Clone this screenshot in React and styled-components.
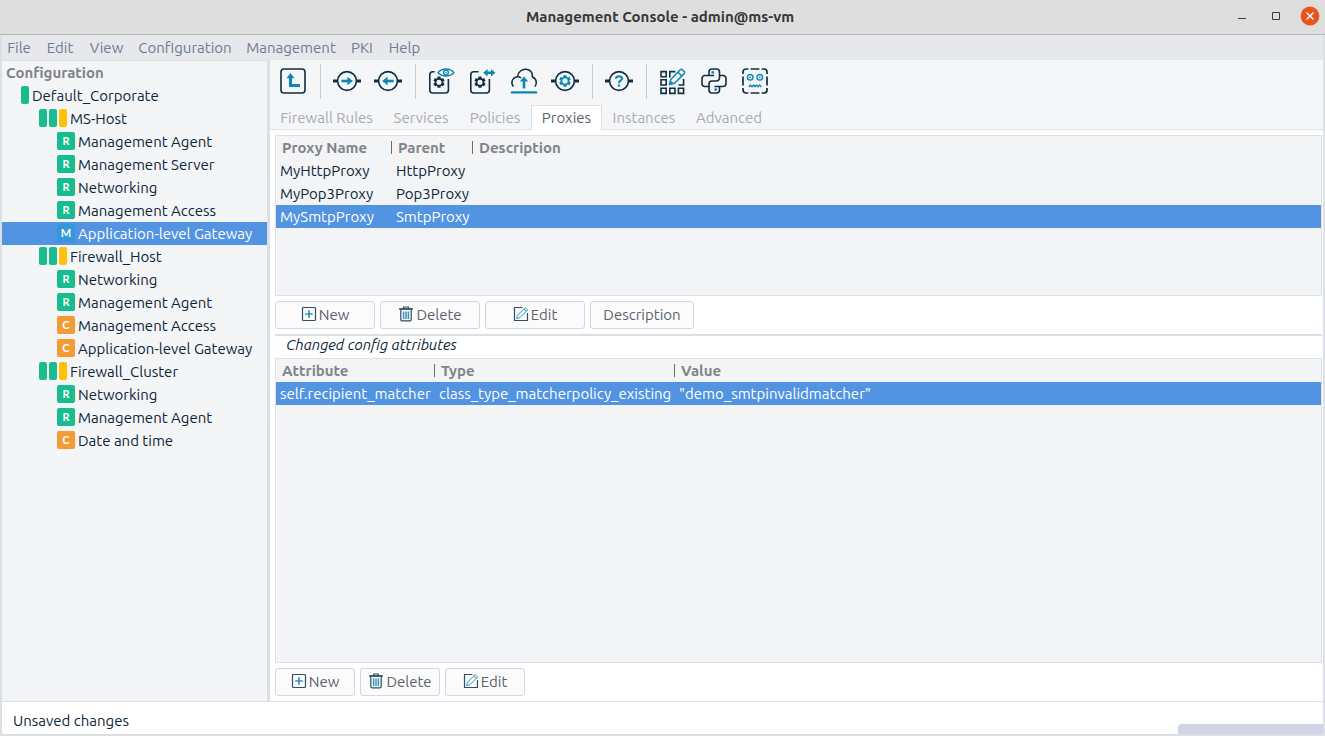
import React from 'react';
import styled, { createGlobalStyle } from 'styled-components';

const ink = '#0f2f44';
const text = '#0d2638';
const accent = '#0e86b4';
const selected = '#5294e2';
const line = '#dcdfe3';
const surface = '#f3f5f7';

const GlobalStyle = createGlobalStyle`
  *, *::before, *::after { box-sizing: border-box; }
  body {
    margin: 0;
    background: #fff;
    color: ${text};
    font: 15px/23px Ubuntu, "Open Sans", "Noto Sans", sans-serif;
  }
  button { font: inherit; color: inherit; margin: 0; padding: 0; border: 0; background: none; }
  svg { display: block; flex: none; }
`;

const Window = styled.div`
  display: flex;
  flex-direction: column;
  min-height: 100vh;
`;

const TitleBar = styled.header`
  display: grid;
  grid-template-columns: 1fr auto 1fr;
  align-items: center;
  height: 35px;
  padding: 0 5px 2px 0;
  background: #dedede;
  border-bottom: 1px solid #b6b6b3;
`;

const Title = styled.h1`
  grid-column: 2;
  margin: 0;
  padding-top: 2px;
  font-size: 15px;
  line-height: 20px;
  font-weight: 700;
  color: #363636;
`;

const WindowControls = styled.div`
  display: flex;
  justify-content: flex-end;
  align-items: center;
  gap: 14px;
`;

const WindowButton = styled.button`
  display: grid;
  place-items: center;
  width: 20px;
  height: 20px;
`;

const Body = styled.div`
  flex: 1;
  display: flex;
  flex-direction: column;
  border: solid ${line};
  border-width: 0 2px 2px;
`;

const MenuBar = styled.nav`
  display: flex;
  height: 25px;
  background: #e7e8eb;
  color: #707a90;
`;

const MenuItem = styled.button`
  width: ${(p) => p.$width}px;
  white-space: nowrap;
`;

const Workspace = styled.div`
  flex: 1;
  display: flex;
`;

const Sidebar = styled.aside`
  flex: none;
  width: 268px;
  border-right: 3px solid ${line};
  border-top: 1px solid ${line};
  background: ${surface};
`;

const SidebarTitle = styled.h2`
  margin: 0;
  padding-left: 4px;
  font-size: 15px;
  line-height: 23px;
  font-weight: 700;
  color: #808388;
`;

const Tree = styled.ul`
  margin: 0;
  padding: 0;
  list-style: none;
`;

const TreeRow = styled.li`
  display: flex;
  align-items: flex-start;
  gap: 3px;
  height: 23px;
  padding-left: ${(p) => 19 + p.$depth * 18}px;
  white-space: nowrap;
  background: ${(p) => (p.$active ? selected : 'transparent')};
  color: ${(p) => (p.$active ? '#fff' : text)};
`;

const Bars = styled.span`
  display: flex;
  gap: 2px;
  margin-top: 2px;
`;

const Bar = styled.span`
  width: 8px;
  height: 18px;
  border-radius: 2px;
  background: ${(p) => (p.$warn ? '#ffc107' : '#18bc8e')};
`;

const badgeColors = { R: '#18bc8e', M: '#3498db', C: '#f39c35' };

const Badge = styled.span`
  width: 18px;
  height: 18px;
  margin-top: 2px;
  border-radius: 2px;
  background: ${(p) => badgeColors[p.$kind]};
  color: #fff;
  font: 700 11px/18px Lato, sans-serif;
  text-align: center;
`;

const Main = styled.main`
  flex: 1;
  min-width: 0;
  display: flex;
  flex-direction: column;
`;

const Toolbar = styled.div`
  display: flex;
  align-items: center;
  height: 45px;
  padding: 0 3px 3px;
  background: #f5f6f7;
`;

const ToolButton = styled.button`
  display: flex;
  align-items: center;
  width: 41px;
  height: 38px;
  padding-left: 6px;
`;

const ToolDivider = styled.span`
  width: 1px;
  height: 35px;
  margin: 0 6px;
  background: #c9cccf;
`;

const Tabs = styled.div`
  display: flex;
  height: 25px;
  background: #f5f6f7;
  box-shadow: inset 0 -1px ${line};
`;

const Tab = styled.button`
  width: ${(p) => p.$width}px;
  padding-bottom: 2px;
  white-space: nowrap;
  border: 1px solid ${(p) => (p.$active ? line : 'transparent')};
  border-bottom: 0;
  background: ${(p) => (p.$active ? '#fff' : 'transparent')};
  color: ${(p) => (p.$active ? '#5c616c' : '#a7abb2')};
`;

const Panel = styled.section`
  flex: 1;
  display: flex;
  flex-direction: column;
  padding: 5px 1px 5px 5px;
`;

const GridBox = styled.div`
  ${(p) => (p.$fill ? 'flex: 1;' : 'height: 161px;')}
  border: 1px solid ${line};
  background: #f3f4f6;
`;

const Table = styled.table`
  width: 100%;
  table-layout: fixed;
  border-collapse: collapse;
  white-space: nowrap;
`;

const HeadCell = styled.th`
  height: 23px;
  padding: 0;
  width: ${(p) => (p.$width ? `${p.$width}px` : 'auto')};
  text-align: left;
  color: #808388;
`;

const HeadLabel = styled.span`
  display: block;
  padding-left: 6px;
  line-height: 13px;
  border-right: ${(p) => (p.$last ? 0 : '1px solid #6a6e75')};
`;

const Row = styled.tr`
  background: ${(p) => (p.$active ? selected : 'transparent')};
  color: ${(p) => (p.$active ? '#fff' : text)};
`;

const Cell = styled.td`
  height: 23px;
  padding: 0 0 0 4px;
`;

const Actions = styled.div`
  display: flex;
  gap: 5px;
  padding-top: 5px;
`;

const ActionButton = styled.button`
  display: flex;
  justify-content: center;
  align-items: center;
  gap: 2px;
  width: ${(p) => p.$width}px;
  height: 28px;
  padding-bottom: 2px;
  border: 1px solid #cfd6e6;
  border-radius: 3px;
  background: #fbfbfc;
  color: #5c616c;
`;

const Splitter = styled.hr`
  width: 100%;
  height: 2px;
  margin: 5px 0 0;
  border: 0;
  background: ${line};
`;

const Caption = styled.h3`
  margin: 0;
  padding-left: 11px;
  font-size: 15px;
  line-height: 18px;
  height: 22px;
  font-weight: 400;
  font-style: italic;
`;

const StatusBar = styled.footer`
  display: flex;
  justify-content: space-between;
  height: 33px;
  border-top: 1px solid ${line};
  padding-left: 11px;
  line-height: 38px;
`;

const Progress = styled.div`
  align-self: flex-end;
  width: 145px;
  height: 10px;
  border-radius: 4px 0 0 0;
  background: #cfd5e6;
`;

const Svg = ({ size = 28, children }) => (
  <svg width={size} height={size} viewBox={`0 0 ${size} ${size}`} fill="none" stroke={ink}
    strokeWidth={size === 28 ? 1.8 : 1.2} strokeLinecap="butt" strokeLinejoin="round"
    opacity={size === 28 ? 1 : 0.85} aria-hidden="true">
    {children}
  </svg>
);

const gearPath = (cx, cy, r) => {
  const points = [];
  for (let i = 0; i < 6; i += 1) {
    [[-15, r], [15, r], [22, r * 0.76], [38, r * 0.76]].forEach(([offset, radius]) => {
      const a = ((i * 60 - 90 + offset) * Math.PI) / 180;
      points.push(`${(cx + radius * Math.cos(a)).toFixed(2)} ${(cy + radius * Math.sin(a)).toFixed(2)}`);
    });
  }
  const hole = r * 0.44;
  return `M${points.join('L')}ZM${cx - hole} ${cy}a${hole} ${hole} 0 1 0 ${2 * hole} 0a${hole} ${hole} 0 1 0 ${-2 * hole} 0Z`;
};

const Gear = ({ cx, cy, r, color }) => (
  <path d={gearPath(cx, cy, r)} fill={color} fillRule="evenodd" stroke="none" />
);

const Node = ({ children }) => (
  <Svg>
    <circle cx="14" cy="14" r="9.4" strokeWidth="1.6" />
    <path d="M0 14H5M23 14H28" strokeWidth="2.8" />
    {children}
  </Svg>
);

const icons = {
  Up: (
    <Svg>
      <rect x="2" y="2" width="24" height="24" rx="3" strokeWidth="1.6" />
      <path d="M11.5 9V18.5H21" stroke={accent} strokeWidth="3" strokeLinejoin="miter" />
      <path d="M7.5 11.2L11.5 6L15.5 11.2Z" fill={accent} stroke="none" />
    </Svg>
  ),
  Forward: (
    <Node>
      <path d="M8.4 14H16" stroke={accent} strokeWidth="2.6" />
      <path d="M14.4 9.8L19.8 14L14.4 18.2Z" fill={accent} stroke="none" />
    </Node>
  ),
  Back: (
    <Node>
      <path d="M19.6 14H12" stroke={accent} strokeWidth="2.6" />
      <path d="M13.6 9.8L8.2 14L13.6 18.2Z" fill={accent} stroke="none" />
    </Node>
  ),
  View: (
    <Svg>
      <g transform="translate(-1 0)">
        <path d="M7.6 4.8H5.8A3 3 0 0 0 2.8 7.8V23A3 3 0 0 0 5.8 26H18.4A3 3 0 0 0 21.4 23V12" strokeWidth="1.6" />
        <Gear cx={12} cy={15.2} r={5.8} color={ink} />
        <path d="M11 5.5C15 0.8 23 0.8 27 5.5C23 10.2 15 10.2 11 5.5Z" stroke={accent} strokeWidth="1.5" />
        <circle cx="19" cy="5.5" r="2.4" stroke={accent} strokeWidth="1.4" />
        <circle cx="19" cy="5.5" r="0.7" fill={accent} stroke="none" />
      </g>
    </Svg>
  ),
  Transfer: (
    <Svg>
      <g transform="translate(-1 0)">
        <path d="M10.6 4.8H5.8A3 3 0 0 0 2.8 7.8V23A3 3 0 0 0 5.8 26H18.4A3 3 0 0 0 21.4 23V12" strokeWidth="1.6" />
        <Gear cx={12} cy={15.2} r={5.8} color={ink} />
        <path d="M18 5.7H25" stroke={accent} strokeWidth="2.6" />
        <path d="M19.6 1.9L15.2 5.7L19.6 9.5ZM23 1.9L27.4 5.7L23 9.5Z" fill={accent} stroke="none" />
      </g>
    </Svg>
  ),
  Upload: (
    <Svg>
      <path d="M3.6 19.6C0.6 16.4 1.4 10.8 7.4 9.8C8 5 12 1.8 16.2 2.2C20.6 2.6 22.8 6 22.4 10C26.8 11.6 27.2 16.6 25 19.6M7.4 9.8Q9.6 9.6 11 11" strokeWidth="1.5" />
      <path d="M14 21.4V13" stroke={accent} strokeWidth="2.6" />
      <path d="M9.8 14.4L14 9.4L18.2 14.4Z" fill={accent} stroke="none" />
      <path d="M2 25.4H26" stroke={accent} strokeWidth="2.4" strokeLinecap="round" />
    </Svg>
  ),
  Settings: (
    <Node><Gear cx={14} cy={14} r={6} color={accent} /></Node>
  ),
  Help: (
    <Node>
      <path d="M11 11.8C11 8.4 17 8.4 17 11.6C17 13.8 14 13.6 14 16.2" stroke={accent} strokeWidth="2.1" />
      <path d="M14 17.4V19.6" stroke={accent} strokeWidth="2.2" />
    </Node>
  ),
  Layout: (
    <Svg>
      <g transform="translate(-1 0)">
        <g strokeWidth="1.6" strokeLinejoin="miter">
          <path d="M3 4.6H8.2V9.8H3ZM3 12.8H8.2V18H3ZM3 21.2H8.2V26.4H3ZM11.8 21.2H17V26.4H11.8ZM20.4 21.2H25.6V26.4H20.4Z" />
          <path d="M17.4 4.6H11.8V10.4M25.6 12V18H20.4" />
        </g>
        <path d="M11.4 17.4L12.8 12.4L22.2 2.8A1.5 1.5 0 0 1 24.3 2.8L26.2 4.6A1.5 1.5 0 0 1 26.2 6.6L16.6 16.2ZM20 5.2L23.8 9" stroke={accent} strokeWidth="1.5" />
        <path d="M11.4 17.4L12.6 13.4L15.6 16.2Z" fill={accent} stroke="none" />
      </g>
    </Svg>
  ),
  Python: (
    <Svg>
      <path d="M9 8.5V5A3 3 0 0 1 12 2H16.5A3 3 0 0 1 19.5 5V11A3 3 0 0 1 16.5 14H12A3 3 0 0 0 9 17V19.5H5A3 3 0 0 1 2 16.5V11.5A3 3 0 0 1 5 8.5H14" strokeWidth="1.6" />
      <path d="M19.5 8.5H23A3 3 0 0 1 26 11.5V16.5A3 3 0 0 1 23 19.5H14.5M19.5 19.5V23A3 3 0 0 1 16.5 26H12A3 3 0 0 1 9 23V19.5" strokeWidth="1.6" />
      <circle cx="12.7" cy="5.4" r="1.4" fill={accent} stroke="none" />
      <circle cx="15.7" cy="22.6" r="1.4" fill={accent} stroke="none" />
    </Svg>
  ),
  Robot: (
    <Svg>
      <path d="M2 7V5A3 3 0 0 1 5 2H7.4M9.6 2H18.4M20.6 2H23A3 3 0 0 1 26 5V7M26 9.4V18.6M26 21V23A3 3 0 0 1 23 26H20.6M18.4 26H9.6M7.4 26H5A3 3 0 0 1 2 23V21M2 18.6V9.4" strokeWidth="1.7" />
      <g stroke={accent} strokeWidth="1.4">
        <circle cx="9.2" cy="10.3" r="2.8" />
        <circle cx="18.8" cy="10.3" r="2.8" />
        <path d="M8 20L9.4 18L11 19.8L12.6 18L14 19.8L15.4 18L17 19.8L18.6 18L20.2 20" />
      </g>
      <circle cx="9.2" cy="10.3" r="0.9" fill={accent} stroke="none" />
      <circle cx="18.8" cy="10.3" r="0.9" fill={accent} stroke="none" />
    </Svg>
  ),
  New: (
    <Svg size={16}>
      <rect x="1.5" y="1.5" width="13" height="13" rx="1" />
      <path d="M8 4.2V11.8M4.2 8H11.8" stroke={accent} strokeWidth="1.7" />
    </Svg>
  ),
  Delete: (
    <Svg size={16}>
      <path d="M1.2 3H14.8" strokeWidth="1.8" />
      <path d="M5.6 2.4V1H10.4V2.4M2.8 4V13.4A1.4 1.4 0 0 0 4.2 14.8H11.8A1.4 1.4 0 0 0 13.2 13.4V4" />
      <path d="M5.6 5.4V13M8 5.4V13M10.4 5.4V13" stroke={accent} strokeWidth="1.5" />
    </Svg>
  ),
  Edit: (
    <Svg size={16}>
      <path d="M9.5 1.5H1.5V14.5H14.5V7" />
      <path d="M3.6 12.6L4.6 9.2L12.2 1.6L14.6 4L7 11.6ZM10.8 3L13.2 5.4" stroke={accent} strokeWidth="1" />
    </Svg>
  ),
};

const menus = [['File', 34], ['Edit', 48], ['View', 45], ['Configuration', 112], ['Management', 100], ['PKI', 42], ['Help', 43]];

const tree = [
  { depth: 0, label: 'Default_Corporate', bars: [0] },
  { depth: 1, label: 'MS-Host', bars: [0, 0, 1] },
  { depth: 2, label: 'Management Agent', badge: 'R' },
  { depth: 2, label: 'Management Server', badge: 'R' },
  { depth: 2, label: 'Networking', badge: 'R' },
  { depth: 2, label: 'Management Access', badge: 'R' },
  { depth: 2, label: 'Application-level Gateway', badge: 'M', active: true },
  { depth: 1, label: 'Firewall_Host', bars: [0, 0, 1] },
  { depth: 2, label: 'Networking', badge: 'R' },
  { depth: 2, label: 'Management Agent', badge: 'R' },
  { depth: 2, label: 'Management Access', badge: 'C' },
  { depth: 2, label: 'Application-level Gateway', badge: 'C' },
  { depth: 1, label: 'Firewall_Cluster', bars: [0, 0, 1] },
  { depth: 2, label: 'Networking', badge: 'R' },
  { depth: 2, label: 'Management Agent', badge: 'R' },
  { depth: 2, label: 'Date and time', badge: 'C' },
];

const toolGroups = [['Up'], ['Forward', 'Back'], ['View', 'Transfer', 'Upload', 'Settings'], ['Help'], ['Layout', 'Python', 'Robot']];

const tabs = [['Firewall Rules', 113], ['Services', 76], ['Policies', 72], ['Proxies', 71], ['Instances', 84], ['Advanced', 86]];

const DataTable = ({ columns, rows, activeRow }) => (
  <Table>
    <thead>
      <tr>
        {columns.map(([name, width]) => (
          <HeadCell key={name} scope="col" $width={width}>
            <HeadLabel $last={!width}>{name}</HeadLabel>
          </HeadCell>
        ))}
      </tr>
    </thead>
    <tbody>
      {rows.map((row, i) => (
        <Row key={row[0]} $active={i === activeRow}>
          {row.map((value, j) => <Cell key={columns[j][0]}>{value}</Cell>)}
        </Row>
      ))}
    </tbody>
  </Table>
);

const ActionRow = ({ actions, width }) => (
  <Actions>
    {actions.map((name) => (
      <ActionButton key={name} type="button" $width={name === 'Description' ? 104 : width}>
        {icons[name]}
        {name}
      </ActionButton>
    ))}
  </Actions>
);

export default function App() {
  return (
    <Window>
      <GlobalStyle />
      <TitleBar>
        <Title>Management Console - admin@ms-vm</Title>
        <WindowControls>
          <WindowButton type="button" aria-label="Minimize">
            <svg width="8" height="8"><path d="M0 6.5H8" stroke="#3b3b3b" /></svg>
          </WindowButton>
          <WindowButton type="button" aria-label="Maximize">
            <svg width="8" height="8"><path d="M.5 .5H7.5V7.5H.5Z" fill="none" stroke="#3b3b3b" /></svg>
          </WindowButton>
          <WindowButton type="button" aria-label="Close">
            <svg width="20" height="20">
              <circle cx="10" cy="10" r="9.4" fill="#e95420" />
              <path d="M6.5 6.5L13.5 13.5M13.5 6.5L6.5 13.5" stroke="#fff" strokeWidth="1.4" />
            </svg>
          </WindowButton>
        </WindowControls>
      </TitleBar>
      <Body>
        <MenuBar>
          {menus.map(([name, width]) => <MenuItem key={name} type="button" $width={width}>{name}</MenuItem>)}
        </MenuBar>
        <Workspace>
          <Sidebar>
            <SidebarTitle>Configuration</SidebarTitle>
            <Tree role="tree">
              {tree.map((item, i) => (
                <TreeRow key={i} role="treeitem" aria-level={item.depth + 1} aria-selected={!!item.active}
                  $depth={item.depth} $active={item.active}>
                  {item.bars && <Bars>{item.bars.map((warn, j) => <Bar key={j} $warn={warn} />)}</Bars>}
                  {item.badge && <Badge $kind={item.badge}>{item.badge}</Badge>}
                  {item.label}
                </TreeRow>
              ))}
            </Tree>
          </Sidebar>
          <Main>
            <Toolbar role="toolbar">
              {toolGroups.map((group, i) => (
                <React.Fragment key={group[0]}>
                  {i > 0 && <ToolDivider />}
                  {group.map((name) => (
                    <ToolButton key={name} type="button" aria-label={name}>{icons[name]}</ToolButton>
                  ))}
                </React.Fragment>
              ))}
            </Toolbar>
            <Tabs role="tablist">
              {tabs.map(([name, width]) => (
                <Tab key={name} type="button" role="tab" aria-selected={name === 'Proxies'}
                  $active={name === 'Proxies'} $width={width}>{name}</Tab>
              ))}
            </Tabs>
            <Panel>
              <GridBox>
                <DataTable
                  columns={[['Proxy Name', 116], ['Parent', 81], ['Description']]}
                  rows={[['MyHttpProxy', 'HttpProxy', ''], ['MyPop3Proxy', 'Pop3Proxy', ''], ['MySmtpProxy', 'SmtpProxy', '']]}
                  activeRow={2}
                />
              </GridBox>
              <ActionRow actions={['New', 'Delete', 'Edit', 'Description']} width={100} />
              <Splitter />
              <Caption>Changed config attributes</Caption>
              <GridBox $fill>
                <DataTable
                  columns={[['Attribute', 159], ['Type', 240], ['Value']]}
                  rows={[['self.recipient_matcher', 'class_type_matcherpolicy_existing', '"demo_smtpinvalidmatcher"']]}
                  activeRow={0}
                />
              </GridBox>
              <ActionRow actions={['New', 'Delete', 'Edit']} width={80} />
            </Panel>
          </Main>
        </Workspace>
        <StatusBar>
          Unsaved changes
          <Progress />
        </StatusBar>
      </Body>
    </Window>
  );
}
